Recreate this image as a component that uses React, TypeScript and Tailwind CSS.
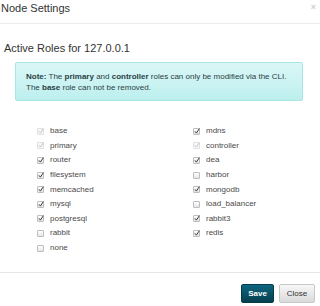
import React from "react";

type Role = { name: string; checked: boolean; disabled?: boolean };

const left: Role[] = [
  { name: "base", checked: true, disabled: true },
  { name: "primary", checked: true, disabled: true },
  { name: "router", checked: true },
  { name: "filesystem", checked: true },
  { name: "memcached", checked: true },
  { name: "mysql", checked: true },
  { name: "postgresql", checked: true },
  { name: "rabbit", checked: false },
  { name: "none", checked: false },
];

const right: Role[] = [
  { name: "mdns", checked: true },
  { name: "controller", checked: true, disabled: true },
  { name: "dea", checked: true },
  { name: "harbor", checked: false },
  { name: "mongodb", checked: true },
  { name: "load_balancer", checked: false },
  { name: "rabbit3", checked: true },
  { name: "redis", checked: true },
];

function Box({ checked, disabled }: { checked: boolean; disabled?: boolean }) {
  return (
    <span
      className={`relative inline-block w-[7px] h-[7px] rounded-[1px] border ${
        disabled ? "border-[#e0e0e0] bg-[#f7f7f7]" : "border-[#bdbdbd] bg-gradient-to-b from-white to-[#e6e6e6]"
      }`}
    >
      {checked && (
        <svg viewBox="0 0 10 10" className="absolute left-0 -top-[1px] w-[6px] h-[6px]">
          <path
            d="M1.5 5.5 L4 8.5 L9 1"
            fill="none"
            stroke={disabled ? "#c6c6c6" : "#333"}
            strokeWidth="1.6"
          />
        </svg>
      )}
    </span>
  );
}

function Column({ roles }: { roles: Role[] }) {
  return (
    <div className="flex flex-col">
      {roles.map((r) => (
        <label key={r.name} className="flex items-center h-[14.6px] gap-[6px] text-[8px] text-[#4a4a4a]">
          <Box checked={r.checked} disabled={r.disabled} />
          <span>{r.name}</span>
        </label>
      ))}
    </div>
  );
}

export default function App() {
  return (
    <div className="w-[320px] h-[306px] bg-white overflow-hidden font-['Liberation_Sans',Arial,sans-serif] text-[#333]">
      <div className="h-[24px] border-b border-[#ececec] flex justify-between items-start px-[1px] pt-[1px]">
        <h3 className="text-[11px] leading-[14px] font-medium text-[#333]">Node Settings</h3>
        <span className="mr-[3px] text-[9px] leading-[12px] font-bold text-[#cfcfcf]">×</span>
      </div>

      <h4 className="mt-[17px] pl-[4px] text-[11px] leading-[14px] font-medium text-[#333]">
        Active Roles for 127.0.0.1
      </h4>

      <div className="mt-[7px] ml-[15px] w-[288px] rounded-[2px] border border-[#a8e6e4] bg-gradient-to-b from-[#dbf7f7] to-[#bcefee] pt-[8px] pb-[7px] pl-[10px] text-[8px] leading-[11px] text-[#2b3f45]">
        <p>
          <b>Note:</b> The <b>primary</b> and <b>controller</b> roles can only be modified via the CLI.
        </p>
        <p>
          The <b>base</b> role can not be removed.
        </p>
      </div>

      <div className="mt-[23px] ml-[37px] grid grid-cols-[156px_1fr]">
        <Column roles={left} />
        <Column roles={right} />
      </div>

      <div className="mt-[17px] border-t border-[#e6e6e6] pt-[11px] pr-[5px] flex justify-end gap-[5px]">
        <button className="h-[19px] w-[33px] rounded-[2px] border border-[#053a48] bg-gradient-to-b from-[#0f6680] to-[#053f4f] text-white text-[8px] font-bold">
          Save
        </button>
        <button className="h-[19px] w-[36px] rounded-[2px] border border-[#c8c8c8] bg-gradient-to-b from-[#f7f7f7] to-[#dadada] text-[#333] text-[8px]">
          Close
        </button>
      </div>
    </div>
  );
}
